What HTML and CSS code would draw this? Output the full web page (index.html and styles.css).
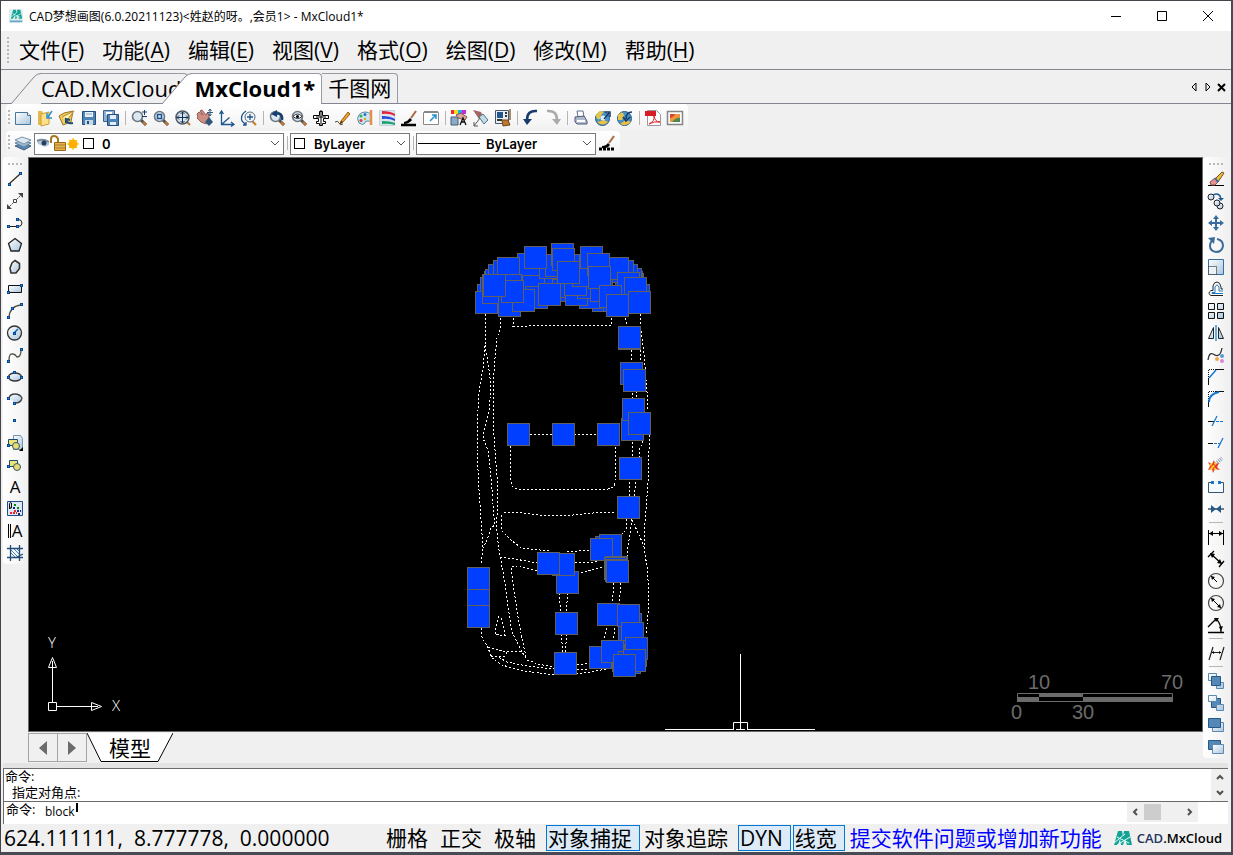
FILE: index.html
```html
<!DOCTYPE html>
<html lang="zh-CN">
  <head>
    <meta charset="UTF-8" />
    <meta name="viewport" content="width=device-width, initial-scale=1.0" />
    <title>CAD梦想画图</title>
    <link rel="stylesheet" href="styles.css">
  </head>
  <body>
    <!-- Shared gradients and repeated shapes -->
    <svg class="defs" aria-hidden="true">
      <defs>
        <linearGradient id="paper" x1="0" y1="0" x2="1" y2="1">
          <stop offset="0" stop-color="#fff" />
          <stop offset="1" stop-color="#a9c6de" />
        </linearGradient>
        <symbol id="lens" viewBox="0 0 18 18">
          <path d="M11 11l5 5" stroke="#4a4a4a" stroke-width="3" />
          <path d="M13 13l3 3" stroke="#c87a2c" stroke-width="2" />
          <circle cx="7.500" cy="7.500" r="5" fill="#dbe8f2" stroke="#6d7780" stroke-width="1.600" />
        </symbol>
        <symbol id="dot" viewBox="0 0 4 4">
          <rect width="4" height="4" fill="#0a3c78" />
          <rect x="1" y="1" width="2" height="2" fill="#1a8cf0" />
        </symbol>
        <symbol id="logo" viewBox="0 0 18 16">
          <path d="M0 15L4 1h4l1 5 1-5h5l3 14h-5l-2-6-2 6H7L6 9l-2 6z" fill="#12a396" />
          <path d="M0 13l11-9M3 15l13-8M3 7l12 6" stroke="#e8fffb" fill="none" />
        </symbol>
      </defs>
    </svg>

    <div class="window">
      <header class="titlebar">
        <svg class="app-icon" viewBox="0 0 18 18"><rect x="1" y="1" width="16" height="16" rx="2" fill="#e2ecec" /><use href="#logo" x="3" y="1" width="13" height="12" /><path d="M2 15h14" stroke="#6aa9c4" stroke-width="2" /></svg>
        <span class="title">CAD梦想画图(6.0.20211123)&lt;姓赵的呀。,会员1&gt; - MxCloud1*</span>
        <div class="window-controls">
          <button type="button" aria-label="最小化"><svg viewBox="0 0 12 12"><path d="M1 6.500h10" /></svg></button>
          <button type="button" aria-label="最大化"><svg viewBox="0 0 12 12"><path d="M1.500 1.500h9v9h-9z" /></svg></button>
          <button type="button" aria-label="关闭"><svg viewBox="0 0 12 12"><path d="M1 1l10 10M11 1L1 11" /></svg></button>
        </div>
      </header>

      <nav class="menubar">
        <span class="handle"></span>
        <button type="button">文件(<u>F</u>)</button>
        <button type="button">功能(<u>A</u>)</button>
        <button type="button">编辑(<u>E</u>)</button>
        <button type="button">视图(<u>V</u>)</button>
        <button type="button">格式(<u>O</u>)</button>
        <button type="button">绘图(<u>D</u>)</button>
        <button type="button">修改(<u>M</u>)</button>
        <button type="button">帮助(<u>H</u>)</button>
      </nav>

      <div class="doc-tabs">
        <button type="button" class="doc-tab slanted"><svg class="edge" viewBox="0 0 30 31"><path d="M0 31L23 4Q26 .5 30 .5V31z" /><path class="line" d="M0 31L23 4Q26 .5 30 .5" /></svg><span>CAD.MxCloud</span></button>
        <button type="button" class="doc-tab slanted active"><svg class="edge" viewBox="0 0 30 31"><path d="M0 31L23 4Q26 .5 30 .5V31z" /><path class="line" d="M0 31L23 4Q26 .5 30 .5" /></svg><span>MxCloud1*</span></button>
        <button type="button" class="doc-tab"><span>千图网</span></button>
        <div class="tab-controls">
          <button type="button" aria-label="向左"><svg viewBox="0 0 10 10"><path d="M7 1v8L3 5z" fill="none" stroke="#000" /></svg></button>
          <button type="button" aria-label="向右"><svg viewBox="0 0 10 10"><path d="M3 1v8l4-4z" fill="none" stroke="#000" /></svg></button>
          <button type="button" aria-label="关闭标签"><svg viewBox="0 0 10 10"><path d="M1 2l7 7M8 2L1 9" stroke="#000" stroke-width="2" /></svg></button>
        </div>
      </div>

      <div class="toolbars">
        <!-- Standard toolbar -->
        <div class="toolbar">
          <span class="handle"></span>
          <button type="button" aria-label="新建"><svg viewBox="0 0 18 18"><path d="M1.500 3.500h12l3 3v9h-15z" fill="url(#paper)" stroke="#47789c" /><path d="M13.500 3.500v3h3" fill="#fff" stroke="#47789c" /></svg></button>
          <button type="button" aria-label="打开"><svg viewBox="0 0 18 18"><path d="M2 2h4l1 2h5v12H2z" fill="#e5b84c" /><path d="M5 5l8-2v12l-8 2z" fill="#ffe08a" stroke="#cf9e33" /><path d="M16 2l-4 6M11 4v5h5" fill="none" stroke="#2c91d0" stroke-width="1.500" /></svg></button>
          <button type="button" aria-label="打开云图"><svg viewBox="0 0 18 18"><path d="M1 7l5-3 9-2-2 11-8 3z" fill="#f4cb58" stroke="#96722a" /><path d="M4 8l12-6-6 8" fill="#fff3ae" stroke="#b58528" /><path d="M15 14q-6 1-7-3M8 14l0-4 4 1" fill="none" stroke="#174d78" stroke-width="2" /></svg></button>
          <button type="button" aria-label="保存"><svg viewBox="0 0 18 18"><path d="M2.500 2.500h13v13h-13z" fill="#4e83b5" stroke="#234f7e" /><path d="M5 3h8v5H5z" fill="#e9f2fa" /><path d="M5 11h8v5H5z" fill="#c9d9e6" /><path d="M7 12h2v3H7z" fill="#234f7e" /><path d="M6 5h6" stroke="#88a9c6" /></svg></button>
          <button type="button" aria-label="另存为"><svg viewBox="0 0 18 18"><path d="M1.500 1.500h11v11h-11z" fill="#8eb0d2" stroke="#35648f" /><path d="M4 3h6v3H4z" fill="#fff" /><path d="M5.500 5.500h11v11h-11z" fill="#4e83b5" stroke="#234f7e" /><path d="M8 6h6v4H8zM8 13h6v3H8z" fill="#e5eef6" /></svg></button>
          <span class="sep"></span>
          <button type="button" aria-label="缩放"><svg viewBox="0 0 18 18"><use href="#lens" /><path d="M12 3h5M14.500 1v5M12 7.500h5" stroke="#173c6b" /></svg></button>
          <button type="button" aria-label="窗口缩放"><svg viewBox="0 0 18 18"><use href="#lens" /><path d="M5.500 5.500h4v4h-4z" fill="none" stroke="#174f91" stroke-width="1.500" /></svg></button>
          <button type="button" aria-label="范围缩放"><svg viewBox="0 0 18 18"><path d="M12 12l4 4" stroke="#bd752d" stroke-width="2" /><circle cx="8.500" cy="8.500" r="6.500" fill="#d8e3ec" stroke="#4e5a66" stroke-width="1.500" /><path d="M3 8.500h11M8.500 3v11M5 6.500l-2 2 2 2M12 6.500l2 2-2 2M6.500 5l2-2 2 2M6.500 12l2 2 2-2" fill="none" stroke="#122f54" /></svg></button>
          <button type="button" aria-label="平移"><svg viewBox="0 0 18 18"><path d="M1 5l2-2 4 3-3-4 2-1 4 5 1-2 2 1 0 6-3 4-5-2-4-4 1-1z" fill="#cc8d82" stroke="#965a56" /><path d="M9 13l4-5 4 5-4 4z" fill="#31567e" /><path d="M14 0v7M11 3.500h6M12.500 2l1.500-2 1.500 2M12.500 5l1.500 2 1.500-2" stroke="#37587f" fill="none" /></svg></button>
          <button type="button" aria-label="坐标系"><svg viewBox="0 0 18 18"><path d="M3.500 3v12.500H15M3.500 15.500l8-7M1.500 5l2-3 2 3M13 13l3 2.500-3 2" fill="none" stroke="#1b578e" stroke-width="1.300" /></svg></button>
          <button type="button" aria-label="动态缩放"><svg viewBox="0 0 18 18"><path d="M12 12l4 4" stroke="#c87a2c" stroke-width="2" /><circle cx="10" cy="8" r="5" fill="#eff5fb" stroke="#5d6b79" /><path d="M7 8h6M10 5v6M6 2Q0 6 2 12l4 4M3 16h3v-3" fill="none" stroke="#1d538c" stroke-width="1.300" /></svg></button>
          <span class="sep"></span>
          <button type="button" aria-label="上一视图"><svg viewBox="0 0 18 18"><use href="#lens" /><path d="M14 11q1-8-7-6" fill="none" stroke="#153d71" stroke-width="2.500" /><path d="M3 5l6-4v7z" fill="#153d71" /></svg></button>
          <button type="button" aria-label="鸟瞰"><svg viewBox="0 0 18 18"><use href="#lens" /><path d="M3 7.500q4.500-5 9 0-4.500 4-9 0z" fill="#fff" stroke="#333" /><circle cx="7.500" cy="7.500" r="1.500" /></svg></button>
          <button type="button" aria-label="正交"><svg viewBox="0 0 18 18"><path d="M7.500 6.500v-4h3v4h6v3h-5v3h2v2h-3v2h-3v-2h-3v-2h2v-3h-5v-3z" fill="#fff" stroke="#000" /><path d="M9 1v16M4 8h10" stroke="#000" /></svg></button>
          <button type="button" aria-label="画笔"><svg viewBox="0 0 18 18"><path d="M1 13q3-2 4 1t4 1" fill="none" stroke="#542" /><path d="M7 12l7-9 2 2-7 8-3 2z" fill="#f0a132" stroke="#9a5b16" /><path d="M6 15l1-3 2 1z" fill="#333" /></svg></button>
          <button type="button" aria-label="调色板"><svg viewBox="0 0 18 18"><path d="M9 3q8 0 6 8-1 2-4 1-2 0-2 2-2 3-6 0-3-5 0-8 2-3 6-3z" fill="#cce5f1" stroke="#578ca6" /><circle cx="5" cy="7" r="1.500" fill="#37b24d" /><circle cx="9" cy="5.500" r="1.500" fill="#3370cc" /><circle cx="5" cy="11.500" r="1.500" fill="#d9432f" /><circle cx="9" cy="10" r="1.200" fill="#dda72c" /><path d="M15 1v15" stroke="#e3904b" stroke-width="2.500" /></svg></button>
          <button type="button" aria-label="颜色"><svg viewBox="0 0 18 18"><path d="M1.500 1.500h15v15h-15z" fill="#dae5ef" stroke="#c4d2de" /><path d="M4 2q8 0 13 3v2Q11 4 4 5z" fill="#e3243b" /><path d="M4 7q8 0 13 3v2Q11 9 4 10z" fill="#2549df" /><path d="M4 12q8 0 13 2v2q-6-2-13-1z" fill="#17a46c" /></svg></button>
          <button type="button" aria-label="线型"><svg viewBox="0 0 18 18"><path d="M1 16h15" stroke="#000" stroke-width="2.500" /><path d="M4 13q4-1 6-4l2 2q-3 4-8 4z" /><path d="M11 9l5-7" stroke="#a7693f" stroke-width="2" /></svg></button>
          <button type="button" aria-label="布局"><svg viewBox="0 0 18 18"><path d="M1.500 3.500h15v12h-15z" fill="#fff" stroke="#898989" /><path d="M2 3h14" stroke="#888" stroke-width="2" /><path d="M8 12l6-6M10 6h4v4" fill="none" stroke="#1e92d4" stroke-width="1.500" /></svg></button>
          <span class="sep"></span>
          <button type="button" aria-label="颜色选择"><svg viewBox="0 0 18 18"><path d="M1 1h3v4H1z" fill="#f1282f" /><path d="M4 1h4v4H4z" fill="#f5dd22" /><path d="M8 1h4v4H8z" fill="#28a7ec" /><path d="M12 1h4v4h-4z" fill="#c62cda" /><path d="M1 8h7v8H1z" fill="#8caac5" stroke="#425d79" /><path d="M6 6l5-2 6 4-2 3-7-2z" fill="#d8a79b" stroke="#80544e" /><path d="M10 16l3-7 3 7M11 13h4" stroke="#111" fill="none" stroke-width="1.300" /></svg></button>
          <button type="button" aria-label="格式刷"><svg viewBox="0 0 18 18"><path d="M1 1l8 2 2 5-4 2z" fill="#a46460" /><path d="M7 8l4-3 5 6-4 4z" fill="#c1dbe9" stroke="#547485" /><path d="M2 17l6-8M2 13v4h4" fill="none" stroke="#555" /></svg></button>
          <button type="button" aria-label="特性"><svg viewBox="0 0 18 18"><path d="M1.500 1.500h13v13h-13z" fill="#e8eef3" stroke="#48586b" /><path d="M3 3h6v6H3z" fill="#22578d" /><path d="M11 4h2M11 7h2M3 11h5" stroke="#333" stroke-width="2" /><path d="M8 11h6l2 5-7 1z" fill="#bc7731" stroke="#744516" /><path d="M16 0v11" stroke="#a48b70" stroke-width="2" /></svg></button>
          <span class="sep"></span>
          <button type="button" aria-label="撤销"><svg viewBox="0 0 18 18"><path d="M15 2Q5 1 5 11" fill="none" stroke="#173b6b" stroke-width="2.500" /><path d="M1 10h9l-5 6z" fill="#173b6b" /></svg></button>
          <button type="button" aria-label="重做"><svg viewBox="0 0 18 18"><path d="M3 2q10-1 10 9" fill="none" stroke="#aaa" stroke-width="2.500" /><path d="M8 10h9l-4 6z" fill="#aaa" /></svg></button>
          <span class="sep"></span>
          <button type="button" aria-label="打印"><svg viewBox="0 0 18 18"><path d="M5 2h6l1 6H6z" fill="#fff" stroke="#5f6f8c" /><path d="M3 8l9-1 3 5v3H5l-2-2z" fill="#aeb9cb" stroke="#4b5b78" /><path d="M5 12h8" stroke="#fff" stroke-width="2" /></svg></button>
          <button type="button" aria-label="上传"><svg viewBox="0 0 18 18"><circle cx="8.500" cy="9.500" r="7" fill="#4993c4" stroke="#255b86" /><path d="M2 6q4-6 8-3-3 2-4 7-4 1-4-4z" fill="#e4c64c" /><path d="M3 13q6 5 11 0l-4-2z" fill="#f0bf40" /><circle cx="9" cy="9" r="2.500" fill="#def2fa" /><path d="M10 10l5-6M11 3h5v5" stroke="#173b6b" stroke-width="1.500" fill="none" /></svg></button>
          <button type="button" aria-label="下载"><svg viewBox="0 0 18 18"><circle cx="8.500" cy="9.500" r="7" fill="#4993c4" stroke="#255b86" /><path d="M2 6q5-5 6 0l-2 5H2z" fill="#e4c64c" /><path d="M4 15q6 3 11-2l-5-2z" fill="#f0bf40" /><path d="M16 3q-6 0-6 7M7 8l3 4 4-4" stroke="#173b6b" stroke-width="1.500" fill="none" /></svg></button>
          <span class="sep"></span>
          <button type="button" aria-label="PDF"><svg viewBox="0 0 18 18"><path d="M3.500 1.500h9l4 4v11h-13z" fill="#fff" stroke="#999" /><path d="M1 2h11v5H1z" fill="#d81b25" /><path d="M5 15q6-3 5-8 1 6 6 6-6-1-11 2z" fill="none" stroke="#e02227" /></svg></button>
          <button type="button" aria-label="图片"><svg viewBox="0 0 18 18"><path d="M1.500 2.500h15v13h-15z" fill="#fff" stroke="#858585" stroke-width="1.500" /><path d="M4 5h10v8H4z" fill="#ed963b" /><path d="M4 5h5q-1 3-5 4z" fill="#d64532" /><path d="M6 13q5-5 8-4v4z" fill="#4f8651" /></svg></button>
        </div>

        <!-- Layer and property toolbar -->
        <div class="toolbar properties">
          <span class="handle"></span>
          <button type="button" aria-label="图层"><svg viewBox="0 0 18 18"><path d="M1 12l7-3 9 3-7 4z" fill="#5d86ac" stroke="#3b628a" /><path d="M1 9l7-3 9 3-7 4z" fill="#9db9d0" stroke="#5f83a4" /><path d="M1 6l7-3 9 3-7 4z" fill="#dce7f0" stroke="#7894ad" /></svg></button>
          <div class="combo layer-combo">
            <select aria-label="图层"><option>0</option></select>
            <div class="combo-icons">
              <svg viewBox="0 0 52 18">
                <path d="M1 7Q7 3 13 8v3l-4 2-7-3z" fill="#b8c8d7" /><path d="M1 7q6-3 12 1" stroke="#7c8b9a" stroke-width="2" fill="none" /><circle cx="8" cy="9" r="2.500" fill="#233f63" />
                <path d="M15 9V5q0-3 3-3t4 3v4" fill="none" stroke="#a57924" stroke-width="2" /><path d="M18.500 8.500h11v8h-11z" fill="#e6b34c" stroke="#98681a" /><path d="M19 11h10M19 14h10" stroke="#a87a2a" />
                <path d="M37 4v12M31 10h12M33 6l8 8M41 6l-8 8" stroke="#ffd21c" stroke-width="1.500" /><circle cx="37" cy="10" r="4.500" fill="#ffaf00" />
              </svg>
              <span class="swatch"></span>
            </div>
            <svg class="chevron" viewBox="0 0 10 6"><path d="M1 1l4 4 4-4" /></svg>
          </div>
          <span class="sep"></span>
          <div class="combo color-combo">
            <select aria-label="颜色"><option>ByLayer</option></select>
            <div class="combo-icons"><span class="swatch"></span></div>
            <svg class="chevron" viewBox="0 0 10 6"><path d="M1 1l4 4 4-4" /></svg>
          </div>
          <span class="sep"></span>
          <div class="combo line-combo">
            <select aria-label="线型"><option>ByLayer</option></select>
            <div class="combo-icons"><span class="line-sample"></span></div>
            <svg class="chevron" viewBox="0 0 10 6"><path d="M1 1l4 4 4-4" /></svg>
          </div>
          <button type="button" aria-label="线型管理"><svg viewBox="0 0 18 18"><path d="M1 15h15" stroke="#000" stroke-width="3" stroke-dasharray="3 1" /><path d="M4 12q4 0 6-3l2 2q-3 4-8 3z" /><path d="M11 9l5-7" stroke="#a7693f" stroke-width="2" /></svg></button>
        </div>
      </div>

      <main class="workspace">
        <!-- Drawing tools -->
        <div class="side-tools left">
          <span class="handle"></span>
          <button type="button" aria-label="直线"><svg viewBox="0 0 18 18"><path d="M3 14L14 4" stroke="#332d1a" stroke-width="1.300" /><use href="#dot" x="2" y="13" width="3" height="3" /><use href="#dot" x="13" y="2" width="3" height="3" /></svg></button>
          <button type="button" aria-label="构造线"><svg viewBox="0 0 18 18"><path d="M2 16L16 2" stroke="#444" stroke-dasharray="2 1" /><path d="M1 17v-5l5 5zM17 1v5l-5-5z" fill="#444" /><path d="M7.500 7.500h3v3h-3z" fill="#fff" stroke="#444" /></svg></button>
          <button type="button" aria-label="多段线"><svg viewBox="0 0 18 18"><path d="M3 12.500h9q4 0 4-3.500t-4-3.500" fill="none" stroke="#222" /><use href="#dot" x="1" y="11" width="3" height="3" /><use href="#dot" x="10" y="11" width="3" height="3" /><use href="#dot" x="10" y="4" width="3" height="3" /></svg></button>
          <button type="button" aria-label="多边形"><svg viewBox="0 0 18 18"><path d="M9 2.500l6.500 5-2.500 7.500H5L2.500 7.500z" fill="url(#paper)" stroke="#222" stroke-width="1.300" /></svg></button>
          <button type="button" aria-label="不规则多边形"><svg viewBox="0 0 18 18"><path d="M9 2.500l4.500 3v5L10 15H5l-1-5 2-5z" fill="url(#paper)" stroke="#39352e" stroke-width="1.600" /></svg></button>
          <button type="button" aria-label="矩形"><svg viewBox="0 0 18 18"><path d="M2.500 5.500h13v7h-13z" fill="url(#paper)" stroke="#111" /><use href="#dot" x="1" y="11" width="3" height="3" /><use href="#dot" x="14" y="4" width="3" height="3" /></svg></button>
          <button type="button" aria-label="圆弧"><svg viewBox="0 0 18 18"><path d="M3 15Q4 4 15 3" fill="none" stroke="#554f43" stroke-width="1.300" /><use href="#dot" x="1" y="14" width="3" height="3" /><use href="#dot" x="5" y="5" width="3" height="3" /><use href="#dot" x="14" y="1" width="3" height="3" /></svg></button>
          <button type="button" aria-label="圆"><svg viewBox="0 0 18 18"><circle cx="8.500" cy="9" r="7" fill="url(#paper)" stroke="#333" stroke-width="1.300" /><path d="M8 9l4-4" stroke="#0863bb" stroke-width="1.500" /><use href="#dot" x="7" y="8" width="3" height="3" /></svg></button>
          <button type="button" aria-label="样条曲线"><svg viewBox="0 0 18 18"><path d="M3 14q0-7 4-6 2 0 4 3 4 0 4-7" fill="none" stroke="#554f43" stroke-width="1.300" /><use href="#dot" x="1" y="14" width="3" height="3" /><use href="#dot" x="14" y="2" width="3" height="3" /></svg></button>
          <button type="button" aria-label="椭圆"><svg viewBox="0 0 18 18"><ellipse cx="9" cy="9" rx="6.500" ry="4" fill="url(#paper)" stroke="#333" stroke-width="1.300" /><use href="#dot" x="1" y="8" width="3" height="3" /><use href="#dot" x="14" y="8" width="3" height="3" /><use href="#dot" x="7" y="3" width="3" height="3" /></svg></button>
          <button type="button" aria-label="椭圆弧"><svg viewBox="0 0 18 18"><path d="M3 8q1-4 6-4t7 4q-1 5-7 5" fill="url(#paper)" stroke="#444" stroke-width="1.300" /><use href="#dot" x="1" y="7" width="3" height="3" /><use href="#dot" x="7" y="12" width="3" height="3" /></svg></button>
          <button type="button" aria-label="点"><svg viewBox="0 0 18 18"><use href="#dot" x="7" y="7" width="3" height="3" /></svg></button>
          <button type="button" aria-label="插入块"><svg viewBox="0 0 18 18"><path d="M7.500 1.500h7l2 3v11h-9z" fill="url(#paper)" stroke="#7393b0" /><path d="M2.500 5.500h9v6h-9z" fill="#eee27a" stroke="#1f4d70" /><circle cx="10" cy="12" r="3.500" fill="#e6dc77" stroke="#385a60" /><use href="#dot" x="1" y="10" width="3" height="3" /><path d="M17 13v4h-4z" /></svg></button>
          <button type="button" aria-label="创建块"><svg viewBox="0 0 18 18"><path d="M3.500 4.500h8v6h-8z" fill="#eee27a" stroke="#1f4d70" /><circle cx="11" cy="11" r="3.500" fill="#e6dc77" stroke="#385a60" /><use href="#dot" x="1" y="9" width="3" height="3" /></svg></button>
          <button type="button" aria-label="文字"><span class="letter">A</span></button>
          <button type="button" aria-label="填充"><svg viewBox="0 0 18 18"><path d="M1.500 1.500h15v14h-15z" fill="#dfe9f3" stroke="#204f91" /><path d="M8 5h2M11 8h2" stroke="#080" stroke-width="2" /><path d="M7 8h2M11 11h4M12 14h3" stroke="#15288c" stroke-width="2" stroke-dasharray="2 1" /><path d="M4 13h7M8 11h2" stroke="#e6282b" stroke-width="2" stroke-dasharray="2 1" /><path d="M3.500 9V4q1-3 2-1v5q-1 2-2-2" fill="none" stroke="#111" /></svg></button>
          <button type="button" aria-label="多行文字"><span class="letter barred">A</span></button>
          <button type="button" aria-label="剖面线"><svg viewBox="0 0 18 18"><path d="M4 5l8 8M7 4l7 7M4 8l5 5M10 4l4 4" stroke="#4683ba" /><path d="M1 4.500h16M1 13.500h16M4.500 1v16M13.500 1v16M17 10L9 14" fill="none" stroke="#204c77" stroke-width="1.300" /></svg></button>
        </div>

        <div class="center">
          <div class="canvas">
            <svg class="drawing" aria-label="汽车图块">
              <g transform="translate(431 77)">
                <g class="car-lines">
                  <path d="M26 79L25 110 23 133 19 157 17 190V215L19 255 21 285 23 312 21 330" />
                  <path d="M25 110L28 128 31 150 29 177 24 195 23 203 27 213 28 215 31 242 34 282 35 290 31 293 27 305 23 313" />
                  <path d="M41 83L40 95 37 103 35 123 33 150V187L35 215 37 242 38 275 36 290 39 315 45 348 49 378 52 397 62 417 67 425 78 429 94 432" />
                  <path d="M54 83L53 91H68L100 90H137L151 91 152 82" />
                  <path d="M165 83L167 91M180 79V91M181 96L184 120 187 157 188 175M180 115V127M171 115L171 127M172 158V163M176 156V163" />
                  <path d="M189 200V215L188 248 185 288 184 312 187 332 188 345V378L186 400" />
                  <path d="M172 207V222M183 206L180 213 179 222M169 247V261M176 247L174 261M167 284L166 295 162 299M172 284L168 312 167 321M172 285L180 302 184 312" />
                  <path d="M70 199H137M50 211V225L51 247Q52 254 59 254H148Q155 253 155 246L156 211" />
                  <path d="M44 277L63 278 80 280H113L133 278 155 277M41 280V295L50 304 61 313 90 316M107 317L130 315" />
                  <path d="M40 322L55 324 77 328M115 328L133 327 144 325M77 336L57 331 51 332 55 362 59 388 63 408 66 422M117 339L144 332" />
                  <path d="M99 358L101 377M108 358L106 377M101 399L103 417M107 399L105 417" />
                  <path d="M154 348L152 368M161 348L159 368M147 393L144 405M155 393L153 405" />
                  <path d="M39 381L36 393 35 399 39 400H45L41 381" />
                  <path d="M21 393L22 402 28 413 32 423 42 430 63 436 87 439H117L130 437 152 433" />
                  <path d="M28 412L43 416H62M31 421H45L47 417M31 421L38 422 47 427 67 431 94 434M117 430L129 428M117 434H129" />
                </g>
                <g id="grips"></g>
              </g>
              <path class="cursor" d="M711.500 496v68M711.500 571v1M636 571.500h68M718 571.500h68M704.500 572v-7.500h14v7.500M707 571.500h9M711.500 564v8" />
            </svg>
            <svg class="ucs" viewBox="0 0 90 90">
              <path d="M8.500 70.500h8v8h-8zM12.500 70V35M17 74.500h34M8.500 35.500h8l-4-10zM51.500 70.500v8l10-4zM12.500 35v-6M52 74.500h6" />
              <text x="8" y="16">Y</text>
              <text x="72" y="79">X</text>
            </svg>
            <svg class="scale" viewBox="0 0 180 55">
              <path d="M7.500 23.500h155v8h-155z" fill="none" stroke="#6b6b6b" />
              <path d="M7 27h22v5H7zM29 23h44v4H29zM73 27h90v5H73z" fill="#6b6b6b" />
              <text x="18" y="19">10</text>
              <text x="151" y="19">70</text>
              <text x="1" y="49">0</text>
              <text x="62" y="49">30</text>
            </svg>
          </div>
          <div class="model-bar">
            <button type="button" class="arrow" aria-label="上一布局"><svg viewBox="0 0 8 14"><path d="M8 0v14L0 7z" /></svg></button>
            <button type="button" class="arrow" aria-label="下一布局"><svg viewBox="0 0 8 14"><path d="M0 0v14l8-7z" /></svg></button>
            <button type="button" class="model-tab"><svg viewBox="0 0 86 30"><path d="M0 0l14 28.500h57L86 0" fill="#fff" stroke="#000" /></svg><span>模型</span></button>
          </div>
        </div>

        <!-- Modify tools -->
        <div class="side-tools right">
          <span class="handle"></span>
          <button type="button" aria-label="删除"><svg viewBox="0 0 18 18"><path d="M1 15.500h16" stroke="#000" /><path d="M8 9l7-7 2 1-6 9z" fill="#ecb83f" stroke="#765318" /><path d="M3 12l5-4 3 4-3 3H4z" fill="#e9918c" stroke="#8a5552" /><path d="M8 8l3 4" stroke="#2f71a5" stroke-width="2" /></svg></button>
          <button type="button" aria-label="复制"><svg viewBox="0 0 18 18"><g fill="url(#paper)" stroke="#222"><circle cx="4" cy="5" r="3" /><circle cx="13" cy="14" r="3" /><circle cx="10" cy="11" r="3" /></g><path d="M6 3q7-3 8 4" fill="none" stroke="#205b8e" stroke-width="1.500" /><path d="M11 6h6l-3 3z" fill="#205b8e" /></svg></button>
          <button type="button" aria-label="移动"><svg viewBox="0 0 18 18"><path d="M9 3v12M3 9h12" stroke="#376da0" stroke-width="2" /><path d="M9 1l3 4H6zM9 17l3-4H6zM1 9l4-3v6zM17 9l-4-3v6z" fill="#376da0" /></svg></button>
          <button type="button" aria-label="旋转"><svg viewBox="0 0 18 18"><path d="M10 3q6 1 6 7-1 6-7 6-6-1-6-6 0-4 3-6" fill="none" stroke="#3d6d99" stroke-width="2" /><path d="M1 2l7-1-1 7z" fill="#3d6d99" /></svg></button>
          <button type="button" aria-label="缩放对象"><svg viewBox="0 0 18 18"><path d="M1.500 1.500h15v15h-15z" fill="url(#paper)" stroke="#376da0" /><path d="M1.500 8.500h8v8h-8z" fill="#eaf1f7" stroke="#111" stroke-dasharray="1 1" /></svg></button>
          <button type="button" aria-label="偏移"><svg viewBox="0 0 18 18"><path d="M16 15.500H4q-4-2 0-5h2V6q1-4 4-4t4 5v2h2" fill="#fff" stroke="#222" /><path d="M16 13.500H5v-1h3V7q2-4 4 0v4h4" fill="none" stroke="#1777c5" /></svg></button>
          <button type="button" aria-label="阵列"><svg viewBox="0 0 18 18"><path d="M1.500 1.500h6v6h-6zM10.500 1.500h6v6h-6zM1.500 10.500h6v6h-6zM10.500 10.500h6v6h-6z" fill="url(#paper)" stroke="#111" /></svg></button>
          <button type="button" aria-label="镜像"><svg viewBox="0 0 18 18"><path d="M6.500 3.500v11h-5zM11.500 3.500v11h5z" fill="url(#paper)" stroke="#222" /><path d="M9 1v16" stroke="#1987cf" stroke-width="1.300" /></svg></button>
          <button type="button" aria-label="编辑曲线"><svg viewBox="0 0 18 18"><path d="M1 14q1-8 5-6 7 5 9-6" fill="none" stroke="#333" stroke-width="1.300" /><circle cx="10" cy="13" r="2" fill="#eda843" /><circle cx="15" cy="15" r="2" fill="#df82df" /><circle cx="15" cy="10" r="2" fill="#579bd9" /></svg></button>
          <button type="button" aria-label="倒角"><svg viewBox="0 0 18 18"><path d="M1.500 17v-7M9 1.500h8" stroke="#111" /><path d="M1.500 9V1.500H9" fill="none" stroke="#111" stroke-dasharray="1 1" /><path d="M2 10l7-8" stroke="#1777d0" stroke-width="1.500" /></svg></button>
          <button type="button" aria-label="圆角"><svg viewBox="0 0 18 18"><path d="M1.500 17v-7M9 1.500h8" stroke="#111" /><path d="M1.500 9V1.500H9" fill="none" stroke="#111" stroke-dasharray="1 1" /><path d="M2 12q0-8 10-10" fill="none" stroke="#1777d0" stroke-width="2" /></svg></button>
          <button type="button" aria-label="修剪"><svg viewBox="0 0 18 18"><path d="M1 9.500h6" stroke="#111" /><path d="M9 9.500h8" stroke="#1777d0" stroke-dasharray="3 1" /><path d="M5 14l5-10" stroke="#1777d0" stroke-width="1.300" /></svg></button>
          <button type="button" aria-label="延伸"><svg viewBox="0 0 18 18"><path d="M1 9.500h5" stroke="#111" /><path d="M7 9.500h6" stroke="#1777d0" stroke-dasharray="3 1" /><path d="M11 14l5-10" stroke="#1777d0" stroke-width="1.300" /></svg></button>
          <button type="button" aria-label="分解"><svg viewBox="0 0 18 18"><path d="M9 8l6-6" stroke="#8aa4b6" stroke-width="4" stroke-dasharray="1 1" /><path d="M1 6l4 2 2-4 1 4 4-1-2 4 3 3-5-1-2 4-1-4-4 1 2-4z" fill="#e63b22" /><path d="M3 8l6 6M9 7l-6 7" stroke="#ffd52a" stroke-width="2" stroke-dasharray="2 1" /></svg></button>
          <button type="button" aria-label="打断"><svg viewBox="0 0 18 18"><path d="M5 4.500H1.500v10h15v-10H13" fill="#f7fafd" stroke="#345574" /><path d="M4 3h3v3H4zM11 3h3v3h-3z" fill="#1679d1" /></svg></button>
          <button type="button" aria-label="合并"><svg viewBox="0 0 18 18"><path d="M1 9h16" stroke="#000" /><path d="M4 5l5 4-5 4zM14 5L9 9l5 4z" fill="#24598b" /></svg></button>
          <span class="sep"></span>
          <button type="button" aria-label="线性标注"><svg viewBox="0 0 18 18"><path d="M1.500 2v15M16.500 2v15M2 5.500h14" stroke="#000" /><path d="M2 5.500L6 3v5zM16 5.500L12 3v5z" /></svg></button>
          <button type="button" aria-label="对齐标注"><svg viewBox="0 0 18 18"><path d="M4 4l11 10M1 7l6-6M12 17l5-6" stroke="#000" stroke-width="1.300" /><path d="M3 3l5 1-3 4zM15 14l-5-1 3-4z" /></svg></button>
          <button type="button" aria-label="半径标注"><svg viewBox="0 0 18 18"><circle cx="9" cy="9" r="7.500" fill="none" stroke="#444" stroke-width="1.200" /><path d="M4 4l6 6" stroke="#000" /><path d="M4 4l4 1-3 3z" /></svg></button>
          <button type="button" aria-label="直径标注"><svg viewBox="0 0 18 18"><circle cx="9" cy="9" r="7.500" fill="none" stroke="#444" stroke-width="1.200" /><path d="M4 4l10 10" stroke="#000" /><path d="M4 4l4 1-3 3zM14 14l-4-1 3-3z" /></svg></button>
          <button type="button" aria-label="角度标注"><svg viewBox="0 0 18 18"><path d="M1 16.500h16M1 11l8-8M9 3q5 4 5 13" fill="none" stroke="#000" stroke-width="1.300" /><path d="M7 2l5 0-3 4zM14 15l-2-4 4-1z" /></svg></button>
          <span class="sep"></span>
          <button type="button" aria-label="编辑标注"><svg viewBox="0 0 18 18"><path d="M2 16L6 3M13 16l4-13M5 8.500h9" stroke="#222" stroke-width="1.200" /><path d="M5 8.500L7 7v3zM14 8.500L12 7v3z" /></svg></button>
          <span class="sep"></span>
          <button type="button" aria-label="置前"><svg viewBox="0 0 18 18"><path d="M1.500 1.500h8v7h-8zM9.500 10.500h7v6h-7z" fill="url(#paper)" stroke="#5b88ad" /><path d="M4.500 4.500h9v9h-9z" fill="#5488b8" stroke="#285780" /></svg></button>
          <button type="button" aria-label="置后"><svg viewBox="0 0 18 18"><path d="M4.500 4.500h9v9h-9z" fill="#5488b8" stroke="#285780" /><path d="M1.500 1.500h8v6h-8zM9.500 10.500h7v6h-7z" fill="url(#paper)" stroke="#5b88ad" /></svg></button>
          <button type="button" aria-label="上移"><svg viewBox="0 0 18 18"><path d="M5.500 6.500h11v9h-11z" fill="url(#paper)" stroke="#5b88ad" /><path d="M1.500 2.500h12v9h-12z" fill="#5488b8" stroke="#285780" /></svg></button>
          <button type="button" aria-label="下移"><svg viewBox="0 0 18 18"><path d="M1.500 2.500h12v9h-12z" fill="#5488b8" stroke="#285780" /><path d="M5.500 6.500h11v9h-11z" fill="url(#paper)" stroke="#5b88ad" /></svg></button>
        </div>
      </main>

      <section class="command">
        <div class="history">
          <div class="log">
            <p>命令:</p>
            <p class="indent">指定对角点:</p>
          </div>
          <div class="v-scroll">
            <svg viewBox="0 0 8 6"><path d="M1 5l3-3 3 3" /></svg>
            <svg viewBox="0 0 8 6"><path d="M1 1l3 3 3-3" /></svg>
          </div>
        </div>
        <div class="prompt">
          <label for="commandInput">命令:</label>
          <div class="entry">
            <input type="text" id="commandInput" value="block" />
            <span class="caret"></span>
          </div>
          <div class="h-scroll">
            <svg viewBox="0 0 6 8"><path d="M5 1L2 4l3 3" /></svg>
            <span class="thumb"></span>
            <svg viewBox="0 0 6 8"><path d="M1 1l3 3-3 3" /></svg>
          </div>
        </div>
      </section>

      <footer class="statusbar">
        <output class="coords">624.111111,&nbsp; 8.777778,&nbsp; 0.000000</output>
        <button type="button">栅格</button>
        <button type="button">正交</button>
        <button type="button">极轴</button>
        <button type="button" class="on">对象捕捉</button>
        <button type="button">对象追踪</button>
        <button type="button" class="on">DYN</button>
        <button type="button" class="on">线宽</button>
        <a href="#">提交软件问题或增加新功能</a>
        <div class="brand"><svg viewBox="0 0 18 16"><use href="#logo" /></svg><span><i>CAD</i>.MxCloud</span></div>
      </footer>
    </div>

    <script>
      // Top left corner of every grip, back to front
      const grips = [
        [78, 34], [92, 30], [92, 44], [99, 40],
        [17, 49], [20, 42], [22, 39], [24, 36], [25, 34], [28, 29], [33, 25], [57, 18],
        [167, 49], [161, 38], [160, 36], [159, 33], [155, 29], [151, 25], [97, 19],
        [62, 40], [65, 51], [82, 20], [79, 21], [85, 19], [132, 54], [119, 51],
        [105, 48], [117, 41], [104, 38], [130, 44], [143, 54], [112, 29], [130, 22],
        [64, 11], [120, 11], [91, 8], [92, 13], [146, 22], [127, 18], [37, 22],
        [157, 37], [164, 42], [128, 31], [97, 26], [139, 50], [168, 56], [146, 59],
        [15, 56], [22, 46], [39, 39], [38, 59], [52, 54], [41, 45], [23, 39], [78, 48],
        [158, 92], [158, 91], [160, 127], [163, 134], [161, 183], [162, 163], [168, 177],
        [47, 188], [92, 188], [137, 188], [159, 222], [157, 261],
        [135, 301], [139, 299], [130, 303], [145, 321], [144, 322], [145, 324], [146, 325],
        [96, 336], [92, 318], [77, 317], [95, 377], [94, 417],
        [7, 332], [7, 354], [7, 370],
        [137, 368], [159, 378], [157, 369], [158, 391], [161, 387], [129, 411],
        [153, 405], [164, 409], [165, 402], [152, 414], [141, 405], [158, 416],
        [163, 414], [153, 419],
      ];
      const layer = document.getElementById("grips");

      grips.forEach(([x, y]) => {
        const grip = document.createElementNS("http://www.w3.org/2000/svg", "rect");
        grip.setAttribute("x", x + 0.5);
        grip.setAttribute("y", y + 0.5);
        grip.setAttribute("width", 22);
        grip.setAttribute("height", 22);
        layer.appendChild(grip);
      });
    </script>
  </body>
</html>
```
FILE: styles.css
```css
* {
  box-sizing: border-box;
}

body {
  margin: 0;
  background-color: #3a3630;
  color: #000;
  font-family: "Open Sans", "Noto Sans CJK SC", sans-serif;
}

button {
  padding: 0;
  border: none;
  background: none;
  color: inherit;
  font: inherit;
  display: flex;
  align-items: center;
  justify-content: center;
}

.defs {
  position: absolute;
  width: 0;
  height: 0;
}

.window {
  display: flex;
  flex-direction: column;
  min-height: 100vh;
  border: 1px solid #46434a;
  border-right: 2px solid #4a4a55;
  border-bottom: 3px solid #4a4a55;
  background-color: #f0f0f0;
}

/* Title bar */
.titlebar {
  display: flex;
  align-items: center;
  height: 30px;
  padding-left: 7px;
  background-color: #fff;
  font-size: 12px;
}

.app-icon {
  width: 16px;
  height: 16px;
  margin-right: 5px;
}

.window-controls {
  display: flex;
  margin-left: auto;
}

.window-controls button {
  width: 46px;
  height: 30px;
}

.window-controls svg {
  width: 12px;
  height: 12px;
  fill: none;
  stroke: #000;
}

/* Menu bar */
.menubar {
  display: flex;
  align-items: center;
  gap: 18px;
  height: 38px;
  padding-left: 6px;
  font-size: 21px;
  line-height: 36px;
  white-space: nowrap;
}

.menubar .handle {
  height: 26px;
  margin-right: -8px;
}

.menubar u {
  text-underline-offset: 3px;
  text-decoration-thickness: 1px;
}

.handle {
  width: 2px;
  height: 16px;
  background: repeating-linear-gradient(#b8b8b8 0 2px, transparent 2px 4px);
}

/* Document tabs */
.doc-tabs {
  display: flex;
  align-items: flex-end;
  height: 35px;
  padding-left: 10px;
  border-top: 1px solid #85858f;
  border-bottom: 1px solid #85858f;
  font-size: 21px;
  line-height: 26px;
}

.doc-tab {
  position: relative;
  height: 30px;
  padding: 0 6px 2px;
  border: 1px solid #9a9aa2;
  border-bottom: none;
  border-left: none;
  border-radius: 0 4px 0 0;
  white-space: nowrap;
}

.doc-tab.slanted {
  margin-left: 30px;
  padding-left: 0;
  font-size: 22px;
}

.doc-tab .edge {
  position: absolute;
  top: -1px;
  left: -30px;
  width: 30px;
  height: 31px;
  fill: #f0f0f0;
}

.doc-tab .line {
  fill: none;
  stroke: #85858f;
}

.doc-tab.active {
  height: 31px;
  margin-bottom: -1px;
  margin-left: 4px;
  padding-left: 2px;
  background-color: #fff;
  font-weight: bold;
  z-index: 1;
}

.doc-tab.active .edge {
  fill: #fff;
}

.tab-controls {
  display: flex;
  align-self: center;
  gap: 4px;
  margin-left: auto;
  padding-right: 4px;
}

.tab-controls svg {
  width: 10px;
  height: 10px;
}

/* Toolbars */
.toolbars {
  display: flex;
  flex-direction: column;
  align-items: flex-start;
  padding-left: 5px;
}

.toolbar {
  display: flex;
  align-items: center;
  height: 27px;
  padding: 0 2px;
  border-radius: 4px;
  background: linear-gradient(#fff, #f1f1f1);
}

.toolbar.properties {
  height: 26px;
  padding-bottom: 2px;
}

.toolbar .handle {
  margin-right: 2px;
}

.toolbar button {
  width: 22px;
  height: 24px;
}

.toolbar button svg,
.side-tools button svg {
  width: 18px;
  height: 18px;
}

.sep {
  width: 1px;
  height: 14px;
  margin: 0 2px 0 3px;
  background-color: #b5b5b5;
}

.combo {
  position: relative;
  height: 22px;
}

.combo select {
  appearance: none;
  width: 100%;
  height: 22px;
  margin: 0;
  border: 1px solid #7a7a7a;
  border-radius: 0;
  background-color: #fff;
  color: #000;
  font: 600 13px Inter, sans-serif;
}

.layer-combo {
  width: 250px;
}

.layer-combo select {
  padding-left: 67px;
}

.color-combo {
  width: 120px;
}

.color-combo select {
  padding-left: 23px;
}

.line-combo {
  width: 180px;
}

.line-combo select {
  padding-left: 69px;
}

.combo-icons {
  position: absolute;
  top: 2px;
  left: 2px;
  display: flex;
  align-items: center;
  height: 18px;
  pointer-events: none;
}

.combo-icons svg {
  width: 52px;
  height: 18px;
  margin-right: -7px;
}

.swatch {
  width: 11px;
  height: 11px;
  margin-left: 2px;
  border: 1px solid #000;
  background-color: #fff;
}

.line-sample {
  width: 62px;
  border-top: 1px solid #000;
}

.chevron {
  position: absolute;
  top: 8px;
  right: 4px;
  width: 10px;
  height: 6px;
  fill: none;
  stroke: #555;
  pointer-events: none;
}

/* Work area */
.workspace {
  display: flex;
  flex: 1;
}

.side-tools {
  display: flex;
  flex-direction: column;
  align-items: center;
  align-self: flex-start;
  flex: none;
  width: 25px;
  padding: 6px 1px 0 0;
  border-radius: 4px;
  background: linear-gradient(90deg, #fff, #f0f0f0);
}

.side-tools.left {
  margin-left: 2px;
}

.side-tools.right {
  margin-right: 2px;
  padding: 6px 0 0;
  width: 26px;
}

.side-tools .handle {
  width: 14px;
  height: 2px;
  margin-bottom: 3px;
  background: repeating-linear-gradient(90deg, #b8b8b8 0 2px, transparent 2px 4px);
}

.side-tools button {
  width: 22px;
  height: 22px;
}

.side-tools .sep {
  width: 14px;
  height: 1px;
  margin: 2px 0 3px;
}

.letter {
  font-size: 17px;
  line-height: 20px;
}

.letter.barred {
  padding-left: 1px;
  border-left: 3px double #000;
  line-height: 14px;
}

.center {
  display: flex;
  flex: 1;
  flex-direction: column;
  min-width: 0;
}

.canvas {
  position: relative;
  flex: 1;
  border: 1px solid #6b6b6b;
  background-color: #000;
}

.drawing {
  position: absolute;
  width: 100%;
  height: 100%;
}

.car-lines {
  fill: none;
  stroke: #fff;
  stroke-dasharray: 2 2;
  shape-rendering: crispEdges;
}

#grips {
  fill: #003fff;
  stroke: #606060;
}

.cursor {
  fill: none;
  stroke: #fff;
}

.ucs {
  position: absolute;
  bottom: 9px;
  left: 11px;
  width: 90px;
  height: 90px;
  fill: none;
  stroke: #fff;
}

.ucs text {
  fill: #fff;
  stroke: none;
  font-size: 15px;
  font-weight: 300;
}

.scale {
  position: absolute;
  right: 12px;
  bottom: 6px;
  width: 180px;
  height: 55px;
}

.scale text {
  fill: #6b6b6b;
  font: 20px "Liberation Sans", sans-serif;
}

/* Layout tabs */
.model-bar {
  display: flex;
  height: 31px;
  padding-top: 1px;
  font-size: 21px;
}

.model-bar .arrow {
  width: 30px;
  height: 29px;
  margin-right: -1px;
  border: 1px solid #a5a5a5;
}

.arrow svg {
  width: 8px;
  height: 14px;
  fill: #6b6b6b;
}

.model-tab {
  position: relative;
  width: 86px;
  height: 30px;
  margin-left: 1px;
}

.model-tab svg {
  position: absolute;
  inset: 0;
}

.model-tab span {
  position: relative;
  line-height: 28px;
}

/* Command line */
.command {
  margin: 0 3px 0 2px;
  border-top: 5px solid #e3e3e3;
  background-color: #fff;
  font-size: 12px;
}

.history {
  display: flex;
  height: 34px;
  border: 1px solid #6b6b6b;
  border-right: none;
}

.log {
  flex: 1;
  padding-left: 1px;
}

.log p {
  margin: 0;
  font-size: 13px;
  line-height: 15px;
}

.log .indent {
  padding-left: 7px;
  line-height: 17px;
}

.v-scroll {
  display: flex;
  flex-direction: column;
  align-items: center;
  justify-content: space-around;
  width: 17px;
  background-color: #f0f0f0;
}

.command svg {
  fill: none;
  stroke: #505050;
  stroke-width: 2px;
}

.v-scroll svg {
  width: 8px;
  height: 6px;
}

.prompt {
  display: flex;
  height: 22px;
  padding-left: 2px;
  border-left: 1px solid #6b6b6b;
}

.prompt label {
  width: 39px;
  font-size: 13px;
  line-height: 15px;
}

.entry {
  position: relative;
  flex: 1;
}

.entry input {
  width: 100%;
  height: 18px;
  padding: 0;
  border: none;
  outline: none;
  font: 12px "Open Sans", sans-serif;
}

.caret {
  position: absolute;
  top: 1px;
  left: 31px;
  width: 2px;
  height: 9px;
  background-color: #000;
}

.h-scroll {
  display: flex;
  align-items: center;
  justify-content: space-between;
  width: 71px;
  height: 20px;
  margin-right: 30px;
  padding: 0 5px;
  background-color: #f0f0f0;
}

.h-scroll svg {
  width: 6px;
  height: 8px;
}

.h-scroll .thumb {
  width: 17px;
  height: 16px;
  margin-right: 20px;
  background-color: #cdcdcd;
}

/* Status bar */
.statusbar {
  display: flex;
  align-items: center;
  height: 28px;
  padding-left: 3px;
  font-size: 21px;
  line-height: 26px;
  white-space: nowrap;
}

.coords {
  flex: 1;
}

.statusbar button {
  height: 26px;
  margin-right: 2px;
  padding: 0 7px 0 1px;
  border: 1px solid transparent;
}

.statusbar .on {
  border-color: #0078d7;
  background-color: #dcebf7;
}

.statusbar a {
  margin-left: 3px;
  color: #0000ff;
  text-decoration: none;
}

.brand {
  display: flex;
  align-items: center;
  gap: 5px;
  margin-left: 12px;
  padding-right: 9px;
  font-size: 13px;
  font-weight: 600;
}

.brand svg {
  width: 18px;
  height: 16px;
}

.brand i {
  color: #26355e;
  font-style: normal;
}
```
